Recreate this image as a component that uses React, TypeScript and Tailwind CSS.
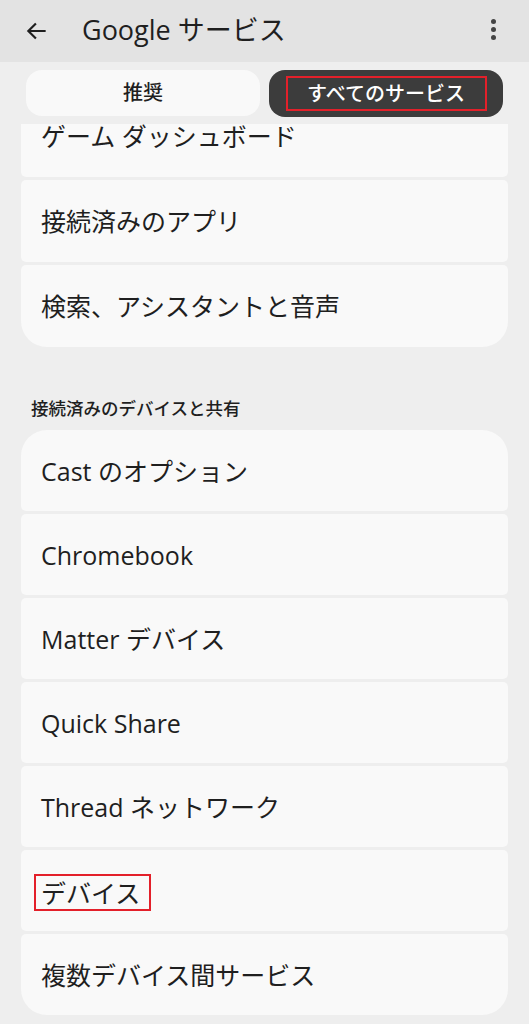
import React from 'react';

const font = { fontFamily: '"Open Sans", "Noto Sans CJK JP", sans-serif' };

const groupOne = ['ゲーム ダッシュボード', '接続済みのアプリ', '検索、アシスタントと音声'];
const groupTwo = [
  'Cast のオプション',
  'Chromebook',
  'Matter デバイス',
  'Quick Share',
  'Thread ネットワーク',
  'デバイス',
  '複数デバイス間サービス',
];

const Row: React.FC<{ label: string; first?: boolean; last?: boolean; boxed?: boolean; tall?: boolean }> = ({
  label,
  first,
  last,
  boxed,
  tall,
}) => (
  <div
    className={`${tall ? 'h-[82px]' : 'h-[81px]'} shrink-0 bg-[#f9f9f9] flex items-center px-5 rounded-[5px] ${
      first ? 'rounded-t-[26px]' : ''
    } ${last ? 'rounded-b-[26px]' : ''}`}
  >
    {boxed ? (
      <span className="h-[37px] flex items-center border-2 border-[#e3202a] pl-[5px] pr-[9px] -ml-[7px] mt-[4px] text-[25px] leading-[30px] text-[#1f1f1f]">
        {label}
      </span>
    ) : (
      <span className="text-[25px] leading-[30px] text-[#1f1f1f]">{label}</span>
    )}
  </div>
);

export default function App() {
  return (
    <div style={font} className="w-[529px] h-[1024px] overflow-hidden bg-[#eeeeee] flex flex-col">
      <div className="h-[62px] shrink-0 bg-[#e3e3e3] flex items-center pl-[24px] pr-[33px]">
        <svg width="26" height="26" viewBox="0 0 24 24" className="text-[#1f1f1f]">
          <path d="M20 12H5M11 5l-7 7 7 7" fill="none" stroke="currentColor" strokeWidth="2" />
        </svg>
        <div className="ml-[32px] text-[27px] text-[#1f1f1f] leading-none -mt-[4px]">Google サービス</div>
        <div className="ml-auto flex flex-col gap-[3px] items-center -mt-[4px]">
          <span className="w-[5px] h-[5px] rounded-full bg-[#444]" />
          <span className="w-[5px] h-[5px] rounded-full bg-[#444]" />
          <span className="w-[5px] h-[5px] rounded-full bg-[#444]" />
        </div>
      </div>

      <div className="h-[62px] shrink-0 flex items-start pt-[8px] pl-[26px] pr-[26px] gap-[9px]">
        <div className="w-[234px] h-[46px] rounded-[16px] bg-[#f9f9f9] flex items-center justify-center text-[20px] font-medium text-[#1f1f1f]">
          推奨
        </div>
        <div className="w-[234px] h-[47px] rounded-[16px] bg-[#3c3c3c] flex items-center justify-center">
          <span className="w-[201px] h-[35px] border-2 border-[#e3202a] flex items-center justify-center text-[20px] font-medium text-white">
            すべてのサービス
          </span>
        </div>
      </div>

      <div className="flex-1 overflow-hidden px-[21px]">
        <div className="flex flex-col gap-[3px] -mt-[29px]">
          {groupOne.map((l, i) => (
            <Row key={l} label={l} tall first={i === 0} last={i === groupOne.length - 1} />
          ))}
        </div>
        <div className="pt-[51px] pb-[12px] pl-[10px] text-[17.5px] font-medium text-[#1f1f1f] leading-[20px]">
          接続済みのデバイスと共有
        </div>
        <div className="flex flex-col gap-[3px]">
          {groupTwo.map((l, i) => (
            <Row key={l} label={l} first={i === 0} last={i === groupTwo.length - 1} boxed={l === 'デバイス'} />
          ))}
        </div>
      </div>
    </div>
  );
}
